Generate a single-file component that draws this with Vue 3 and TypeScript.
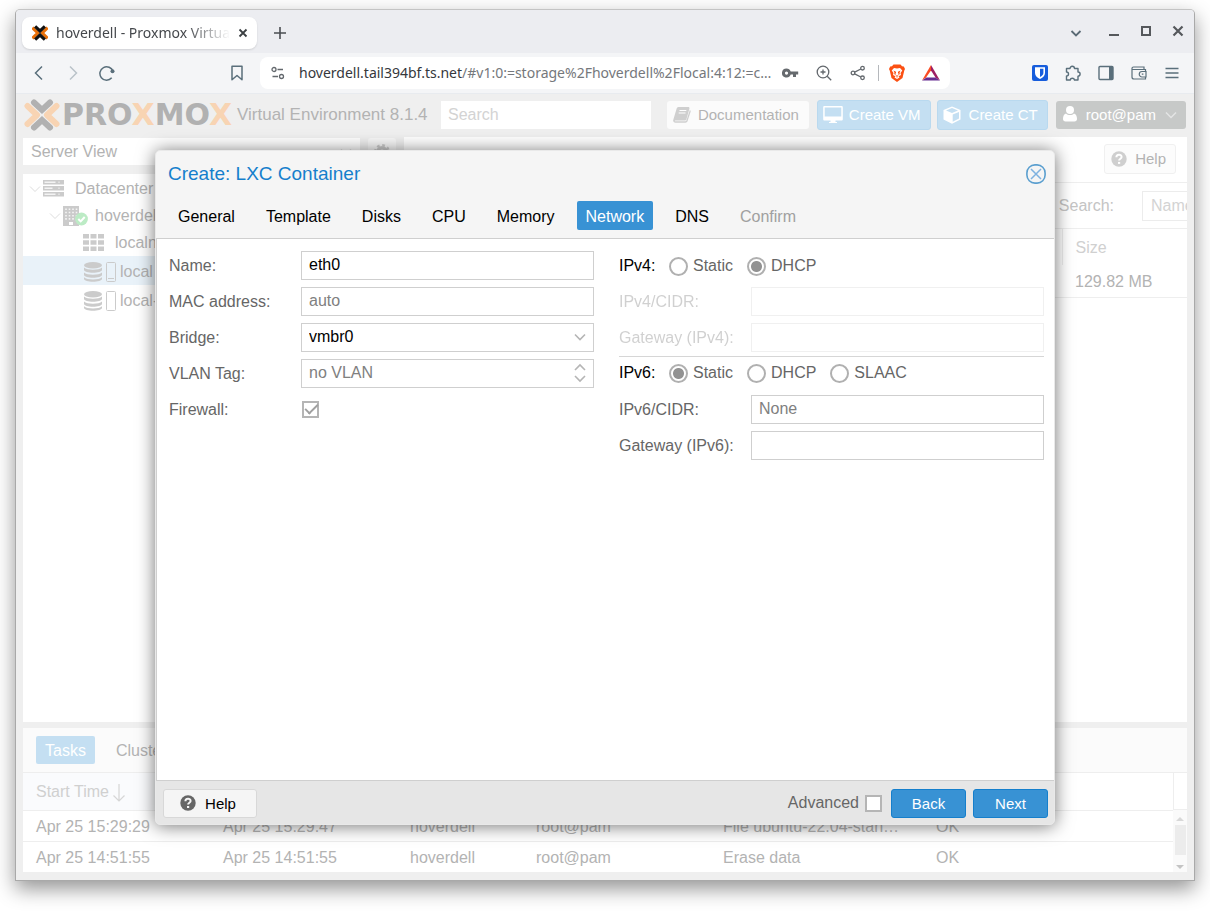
<script setup lang="ts">
import { ref } from 'vue'

interface WizardTab { label: string; disabled?: boolean }
interface Task { start: string; end: string; node: string; user: string; description: string; status: string }

const wizardTabs: WizardTab[] = [
  { label: 'General' },
  { label: 'Template' },
  { label: 'Disks' },
  { label: 'CPU' },
  { label: 'Memory' },
  { label: 'Network' },
  { label: 'DNS' },
  { label: 'Confirm', disabled: true },
]
const activeTab = ref('Network')

const tasks: Task[] = [
  { start: 'Apr 25 15:29:29', end: 'Apr 25 15:29:47', node: 'hoverdell', user: 'root@pam', description: 'File ubuntu-22.04-stan…', status: 'OK' },
  { start: 'Apr 25 14:51:55', end: 'Apr 25 14:51:55', node: 'hoverdell', user: 'root@pam', description: 'Erase data', status: 'OK' },
]

const name = ref('eth0')
const mac = ref('')
const bridge = ref('vmbr0')
const vlan = ref('')
const firewall = ref(true)
const ipv4Mode = ref('DHCP')
const ipv6Mode = ref('Static')
const ipv6 = ref('')
const gateway6 = ref('')
const advanced = ref(false)
</script>

<template>
  <div class="desktop">
    <div class="window">
      <div class="tabstrip">
        <div class="browser-tab">
          <svg class="favicon" width="16" height="16" viewBox="0 0 36 32">
            <g fill="none" stroke-width="7">
              <path stroke="#e8700a" d="M1 4l12 12L1 28M35 4L23 16l12 12" />
              <path stroke="#111" d="M7 1l11 10.500L29 1M7 31l11-10.500L29 31" />
            </g>
          </svg>
          <span class="tab-title">hoverdell - Proxmox Virtual Environment</span>
          <button class="plain" aria-label="Close tab">
            <svg width="10" height="10" viewBox="0 0 10 10"><path d="M1.500 1.500l7 7M8.500 1.500l-7 7" stroke="#3c4043" stroke-width="1.800" /></svg>
          </button>
        </div>
        <button class="plain new-tab" aria-label="New tab">
          <svg width="12" height="12" viewBox="0 0 12 12"><path d="M6 0v12M0 6h12" stroke="#4a4d52" stroke-width="1.600" /></svg>
        </button>
        <div class="window-controls">
          <button class="plain wide" aria-label="Search tabs">
            <svg width="12" height="12" viewBox="0 0 12 12"><path d="M1.500 4L6 8.500 10.500 4" fill="none" stroke="#5a6a75" stroke-width="1.800" /></svg>
          </button>
          <button class="plain" aria-label="Minimize">
            <svg width="12" height="12" viewBox="0 0 12 12"><path d="M1 10h10" stroke="#55585c" stroke-width="2" /></svg>
          </button>
          <button class="plain" aria-label="Maximize">
            <svg width="12" height="12" viewBox="0 0 12 12"><path d="M2 2h8v8H2z" fill="none" stroke="#55585c" stroke-width="2" /></svg>
          </button>
          <button class="plain" aria-label="Close window">
            <svg width="12" height="12" viewBox="0 0 12 12"><path d="M1.500 1.500l9 9M10.500 1.500l-9 9" stroke="#55585c" stroke-width="2.200" /></svg>
          </button>
        </div>
      </div>

      <div class="toolbar">
        <button class="plain nav" aria-label="Back">
          <svg width="16" height="16" viewBox="0 0 16 16"><path d="M11 1.500L4.500 8l6.500 6.500" fill="none" stroke="#5a6f7b" stroke-width="1.500" /></svg>
        </button>
        <button class="plain nav" aria-label="Forward">
          <svg width="16" height="16" viewBox="0 0 16 16"><path d="M5 1.500L11.500 8 5 14.500" fill="none" stroke="#bac3c9" stroke-width="1.500" /></svg>
        </button>
        <button class="plain nav" aria-label="Reload">
          <svg width="16" height="16" viewBox="0 0 16 16">
            <path d="M14 6.500A6.700 6.700 0 1 0 12.700 12.800" fill="none" stroke="#5a6f7b" stroke-width="1.500" />
            <circle cx="13.500" cy="6.300" r="2" fill="#5a6f7b" />
          </svg>
        </button>
        <button class="plain nav bookmark" aria-label="Bookmark">
          <svg width="16" height="16" viewBox="0 0 16 16"><path d="M3 1.200h10v13.600l-5-4.300-5 4.300z" fill="none" stroke="#5a6f7b" stroke-width="1.500" stroke-linejoin="round" /></svg>
        </button>
        <div class="address">
          <svg width="14" height="14" viewBox="0 0 14 14" fill="none" stroke="#63686d" stroke-width="1.300">
            <circle cx="3" cy="3.500" r="2" /><path d="M6.500 3.500H12M1.500 10.500H7" /><circle cx="10.500" cy="10.500" r="2" />
          </svg>
          <div class="url" role="textbox" aria-label="Address"><span>hoverdell.tail394bf.ts.net</span>/#v1:0:=storage%2Fhoverdell%2Flocal:4:12:=c…</div>
          <button class="plain nav" aria-label="Passwords">
            <svg width="18" height="12" viewBox="0 0 18 12"><path fill="#666a6e" fill-rule="evenodd" d="M5.500 1.500a4.500 4.500 0 1 0 4.200 6H12V10h3V7.500h2.200v-3H9.700A4.500 4.500 0 0 0 5.500 1.500zm0 3a1.600 1.600 0 1 1 0 3.200 1.600 1.600 0 0 1 0-3.200z" /></svg>
          </button>
          <button class="plain nav" aria-label="Zoom">
            <svg width="16" height="16" viewBox="0 0 16 16" fill="none" stroke="#63686d" stroke-width="1.300"><circle cx="7" cy="7" r="5.800" /><path d="M11.200 11.200L15.200 15.200M4.500 7h5M7 4.500v5" /></svg>
          </button>
          <button class="plain nav" aria-label="Share">
            <svg width="16" height="16" viewBox="0 0 16 16" fill="none" stroke="#63686d" stroke-width="1.300"><circle cx="3" cy="8" r="1.800" /><circle cx="12.500" cy="3.200" r="1.800" /><circle cx="12.500" cy="12.800" r="1.800" /><path d="M4.700 7.200L10.800 4M4.700 8.800l6.100 3.200" /></svg>
          </button>
          <span class="divider"></span>
          <button class="plain nav" aria-label="Brave Shields">
            <svg width="16" height="18" viewBox="0 0 16 18">
              <path fill="#fb5013" d="M4.500.5h7L13 2.200l1.800.2L16 5l-.7 1.500L13.500 14 8 18l-5.500-4L.7 6.500 0 5l1.200-2.600L3 2.200z" />
              <path fill="#fff" d="M5 4l3 .5L11 4l2.300 2.500L11.500 9l.5 2-2.500 1.200 1 1.300L8 15l-2.500-1.500 1-1.300L4 11l.5-2-1.800-2.500z" />
              <path fill="#fb5013" d="M4.500 6.500L7 7.700v1.600L6 10l2 1.800L10 10l-1-.7V7.700l2.500-1.200-1 2.300.3 1.200L8.500 12v1.500h-1V12L5.200 10l.3-1.200z" />
            </svg>
          </button>
          <button class="plain nav" aria-label="Brave Rewards">
            <svg width="18" height="16" viewBox="0 0 18 16"><path fill="#fb4b22" d="M9 0v5.500L4 12.500l-4 3z" /><path fill="#9e1f63" d="M9 0l9 15.500-4.500-3L9 5.500z" /><path fill="#662d91" d="M0 15.500l4.500-3h9l4.500 3z" /></svg>
          </button>
        </div>
        <button class="plain ext" aria-label="Bitwarden">
          <svg width="16" height="16" viewBox="0 0 16 16"><rect width="16" height="16" rx="2" fill="#175ddc" /><path fill="#fff" fill-rule="evenodd" d="M3 2.200h10V8c0 3-2.500 4.800-5 6-2.500-1.200-5-3-5-6zm5 1.600v8.300c1.800-1 3.400-2.300 3.400-4.100V3.800z" /></svg>
        </button>
        <button class="plain ext" aria-label="Extensions">
          <svg width="16" height="16" viewBox="0 0 16 16"><path d="M1.500 3.500H5A2 2 0 1 1 9.500 3.500H13V7a2 2 0 1 1 0 4.200V15H9.500a2.200 2.200 0 0 0-4.300 0H1.500v-4a2 2 0 0 0 0-4z" fill="none" stroke="#5a6f7b" stroke-width="1.400" stroke-linejoin="round" /></svg>
        </button>
        <button class="plain ext" aria-label="Sidebar">
          <svg width="16" height="16" viewBox="0 0 16 16"><rect x="1" y="1.500" width="14" height="13" rx="1" fill="none" stroke="#5a6f7b" stroke-width="1.400" /><path d="M11 1.500h4v13h-4z" fill="#5a6f7b" /></svg>
        </button>
        <button class="plain ext" aria-label="Wallet">
          <svg width="16" height="16" viewBox="0 0 16 16" fill="none" stroke="#5a6f7b" stroke-width="1.200"><path d="M14.500 6.500V4.500H1V12a2 2 0 0 0 2 2h11.500v-2M1 4.500V3.300C1 2.500 1.500 2 2.500 2H13v2.500" /><path d="M15 6.500h-4a2.700 2.700 0 0 0 0 5.500h4zM10.800 9.200h1.600" /></svg>
        </button>
        <button class="plain ext" aria-label="Menu">
          <svg width="16" height="16" viewBox="0 0 16 16"><path d="M1.500 3.500h13M1.500 8h13M1.500 12.500h13" stroke="#5a6f7b" stroke-width="1.400" /></svg>
        </button>
      </div>

      <div class="app">
        <header class="app-header">
          <div class="logo">
            <svg width="36" height="32" viewBox="0 0 36 32">
              <g fill="none" stroke-width="6" stroke-linecap="round" stroke-linejoin="round">
                <path stroke="#f8d4b3" d="M3.500 7L13 16l-9.500 9M32.500 7L23 16l9.500 9" />
                <path stroke="#b1b1b1" stroke-linejoin="miter" d="M10 3.500l8 7.500 8-7.500M10 28.500L18 21l8 7.500" />
              </g>
            </svg>
            <span class="wordmark">PRO<i>X</i>MO<i>X</i></span>
          </div>
          <span class="product">Virtual Environment 8.1.4</span>
          <input class="search" type="text" placeholder="Search" aria-label="Search">
          <button class="hbtn light docs">
            <svg width="18" height="16" viewBox="0 0 18 16"><path fill="#cfcfcf" d="M5.500 0h9.700c1 0 1.500.8 1.200 1.800L13.500 12c-.3 1-1 1.500-2 1.500H2.200c-.5 0-.7.800 0 .8h10c.7 0 1-.3 1.200-.8L16.800 3c.8.3 1 1 .8 1.800l-3 9.200c-.3 1-1.200 1.700-2.200 1.700H2.500C.6 15.700-.2 14.200.3 12.800L3.500 2C3.800.8 4.500 0 5.500 0z" /><path d="M6.500 3.500h6.800M5.700 6h6.800" stroke="#fff" /></svg>
            Documentation
          </button>
          <button class="hbtn blue">
            <svg width="20" height="18" viewBox="0 0 20 18"><path fill="#fff" fill-rule="evenodd" d="M1.500 0h17c.8 0 1.300.5 1.300 1.200v12c0 .8-.5 1.300-1.300 1.300h-6V16H14v1H6v-1h1.500v-1.500h-6C.7 14.500.2 14 .2 13.200v-12C.2.500.7 0 1.500 0zm.2 1.400v9.200h16.600V1.400z" /></svg>
            Create VM
          </button>
          <button class="hbtn blue ct">
            <svg width="18" height="18" viewBox="0 0 18 18"><path fill="#fff" fill-rule="evenodd" d="M9 .5L17.500 4v9.500L9 17.800.5 13.500V4zm0 1.400L3 4.400l6 2.500 6-2.500zm7 4L9.700 8.500v7.200L16 12.600z" /></svg>
            Create CT
          </button>
          <button class="hbtn user">
            <svg width="14" height="18" viewBox="0 0 14 18"><circle cx="7" cy="4" r="4" fill="#fff" /><path fill="#fff" d="M3 7.500c2 2 6 2 8 0 2.200.5 3 3 3 5.500 0 1.500-1 2.500-2.500 2.500h-9C1 15.500 0 14.500 0 13c0-2.500.8-5 3-5.500z" /></svg>
            root@pam
            <svg class="caret" width="12" height="8" viewBox="0 0 12 8"><path d="M1 1.500L6 6.500l5-5" fill="none" stroke="#e4e5e5" stroke-width="1.500" /></svg>
          </button>
        </header>

        <div class="main">
          <aside class="side">
            <div class="side-head">
              <div class="combo view">
                <select aria-label="View"><option>Server View</option></select>
                <svg width="12" height="8" viewBox="0 0 12 8"><path d="M1 1.500L6 6.500l5-5" fill="none" stroke="#e0e0e0" stroke-width="1.500" /></svg>
              </div>
              <button class="gear" aria-label="Settings">
                <svg width="16" height="16" viewBox="0 0 16 16"><circle cx="8" cy="8" r="4.300" fill="none" stroke="#ccc" stroke-width="3.400" /><circle cx="8" cy="8" r="6.800" fill="none" stroke="#ccc" stroke-width="2.400" stroke-dasharray="2.700 2.640" /></svg>
              </button>
            </div>
            <ul class="tree">
              <li>
                <svg class="arrow" width="12" height="8" viewBox="0 0 12 8"><path d="M1 1.500L6 6.500l5-5" fill="none" stroke="#ddd" /></svg>
                <svg class="dc" width="21" height="17" viewBox="0 0 21 17"><path fill="#cbcbcb" d="M0 0h21v4.500H0zM0 6h21v4.500H0zM0 12h21v4.500H0z" /><path d="M1.500 2.200h11M1.500 8.200h8M1.500 14.200h11M15.500 2.200h1M15.500 8.200h1M15.500 14.200h1" stroke="#f3f3f3" stroke-width="1.500" /></svg>
                Datacenter
              </li>
              <li class="l1">
                <svg class="arrow" width="12" height="8" viewBox="0 0 12 8"><path d="M1 1.500L6 6.500l5-5" fill="none" stroke="#ddd" /></svg>
                <svg class="node" width="25" height="20" viewBox="0 0 25 20"><path fill="#cbcbcb" d="M0 0h16v20H0z" /><path d="M3 2.500v12M6.500 2.500v12M10 2.500v12M13.500 2.500v12" stroke="#f5f5f5" stroke-width="1.600" stroke-dasharray="1.600 1.600" /><path fill="#fff" d="M6 16h4v3H6z" /><circle cx="18.500" cy="13" r="6.400" fill="#bcebc5" /><path d="M15.300 13l2.400 2.400 4-4.400" fill="none" stroke="#fff" stroke-width="2" /></svg>
                hoverdell
              </li>
              <li class="l2">
                <svg class="net" width="21" height="17" viewBox="0 0 21 17"><path fill="#cbcbcb" d="M0 0h6v4.500H0zM7.500 0h6v4.500h-6zM15 0h6v4.500h-6zM0 6.200h6v4.500H0zM7.500 6.200h6v4.500h-6zM15 6.200h6v4.500h-6zM0 12.400h6V17H0zM7.500 12.400h6V17h-6zM15 12.400h6V17h-6z" /></svg>
                localnet
              </li>
              <li v-for="(store, i) in ['local', 'local-lvm']" :key="store" class="l2 store" :class="{ selected: i === 0 }">
                <svg class="disk" width="18" height="20" viewBox="0 0 18 20"><ellipse cx="9" cy="3.200" rx="9" ry="3.200" fill="#cbcbcb" /><path fill="#cbcbcb" d="M0 5.500c3 3 15 3 18 0v2.300c0 4-18 4-18 0zM0 10.500c3 3 15 3 18 0v2.300c0 4-18 4-18 0zM0 15.200c3 3 15 3 18 0v1.600c0 4-18 4-18 0z" /></svg>
                <svg class="usage" width="10" height="20" viewBox="0 0 10 20"><rect x=".5" y=".5" width="9" height="19" rx="1" fill="none" stroke="#cbcbcb" /><path v-if="i === 0" d="M2 16.500h6" stroke="#cbcbcb" /></svg>
                {{ store }}
              </li>
            </ul>
          </aside>

          <section class="content">
            <div class="content-head">
              <button class="help-faded">
                <svg width="16" height="16" viewBox="0 0 16 16"><circle cx="8" cy="8" r="7.700" fill="#cfcfcf" /><path d="M5.400 6.200C5.400 3 10.600 3 10.600 6c0 1.800-2.500 1.700-2.500 3.600" fill="none" stroke="#fff" stroke-width="2" /><path d="M7 10.900h2.200v2H7z" fill="#fff" /></svg>
                Help
              </button>
            </div>
            <div class="content-tools">
              <label for="content-search">Search:</label>
              <input id="content-search" type="text" placeholder="Name, Format">
            </div>
            <table class="content-table">
              <thead><tr><th aria-label="Name"></th><th class="size">Size</th></tr></thead>
              <tbody><tr><td></td><td class="size">129.82 MB</td></tr></tbody>
            </table>
          </section>
        </div>

        <section class="log">
          <nav class="log-tabs">
            <button class="on">Tasks</button>
            <button>Cluster log</button>
          </nav>
          <div class="log-grid">
            <table>
              <colgroup><col class="c-time"><col class="c-time"><col class="c-node"><col class="c-time"><col class="c-desc"><col></colgroup>
              <thead>
                <tr>
                  <th class="sorted">Start Time <svg width="12" height="18" viewBox="0 0 12 18"><path d="M6 0v17M.5 11.500L6 17l5.500-5.500" fill="none" stroke="#d6d6d6" stroke-width="1.200" /></svg></th>
                  <th aria-label="End Time"></th><th aria-label="Node"></th><th aria-label="User name"></th><th aria-label="Description"></th><th aria-label="Status"></th>
                </tr>
              </thead>
              <tbody>
                <tr v-for="t in tasks" :key="t.start">
                  <td>{{ t.start }}</td><td>{{ t.end }}</td><td>{{ t.node }}</td><td>{{ t.user }}</td><td>{{ t.description }}</td><td>{{ t.status }}</td>
                </tr>
              </tbody>
            </table>
            <div class="scroll">
              <div class="scroll-head"></div>
              <div class="scroll-track">
                <svg width="8" height="4" viewBox="0 0 8 4"><path d="M0 4l4-4 4 4z" fill="#d8d8d8" /></svg>
                <div class="thumb"></div>
                <svg width="8" height="4" viewBox="0 0 8 4"><path d="M0 0l4 4 4-4z" fill="#c4c4c4" /></svg>
              </div>
            </div>
          </div>
        </section>

        <div class="mask">
          <form class="dialog" role="dialog" aria-labelledby="dialog-title" @submit.prevent>
            <div class="dialog-head">
              <div class="title-row">
                <h1 id="dialog-title">Create: LXC Container</h1>
                <button type="button" class="plain close" aria-label="Close">
                  <svg width="20" height="20" viewBox="0 0 20 20"><rect x=".9" y=".9" width="18.200" height="18.200" rx="8" fill="none" stroke="#5b9fcf" stroke-width="1.600" /><path d="M5 5l10 10M15 5L5 15" stroke="#7fb2e0" stroke-width="1.500" /></svg>
                </button>
              </div>
              <nav class="wizard-tabs">
                <button v-for="t in wizardTabs" :key="t.label" type="button" :class="{ active: t.label === activeTab }" :disabled="t.disabled" @click="activeTab = t.label">{{ t.label }}</button>
              </nav>
            </div>

            <div class="dialog-body">
              <div class="column">
                <div class="field"><label for="f-name">Name:</label><input id="f-name" v-model="name" class="box" type="text"></div>
                <div class="field"><label for="f-mac">MAC address:</label><input id="f-mac" v-model="mac" class="box" type="text" placeholder="auto"></div>
                <div class="field">
                  <label for="f-bridge">Bridge:</label>
                  <div class="combo">
                    <select id="f-bridge" v-model="bridge" class="box"><option>vmbr0</option></select>
                    <svg width="12" height="8" viewBox="0 0 12 8"><path d="M1 1.500L6 6.500l5-5" fill="none" stroke="#b5b5b5" stroke-width="1.600" /></svg>
                  </div>
                </div>
                <div class="field">
                  <label for="f-vlan">VLAN Tag:</label>
                  <div class="combo">
                    <input id="f-vlan" v-model="vlan" class="box" type="text" placeholder="no VLAN">
                    <svg width="12" height="20" viewBox="0 0 12 20"><path d="M1 7l5-5 5 5M1 13l5 5 5-5" fill="none" stroke="#b5b5b5" stroke-width="1.600" /></svg>
                  </div>
                </div>
                <div class="field"><label for="f-fw">Firewall:</label><input id="f-fw" v-model="firewall" class="check inset" type="checkbox"></div>
              </div>

              <div class="column">
                <div class="radios" role="radiogroup" aria-labelledby="ipv4-legend">
                  <span id="ipv4-legend">IPv4:</span>
                  <label v-for="m in ['Static', 'DHCP']" :key="m"><input v-model="ipv4Mode" type="radio" name="ipv4" :value="m">{{ m }}</label>
                </div>
                <div class="field off"><label for="f-ip4">IPv4/CIDR:</label><input id="f-ip4" class="box" type="text" disabled></div>
                <div class="field off"><label for="f-gw4">Gateway (IPv4):</label><input id="f-gw4" class="box" type="text" disabled></div>
                <div class="radios ruled" role="radiogroup" aria-labelledby="ipv6-legend">
                  <span id="ipv6-legend">IPv6:</span>
                  <label v-for="m in ['Static', 'DHCP', 'SLAAC']" :key="m"><input v-model="ipv6Mode" type="radio" name="ipv6" :value="m">{{ m }}</label>
                </div>
                <div class="field"><label for="f-ip6">IPv6/CIDR:</label><input id="f-ip6" v-model="ipv6" class="box" type="text" placeholder="None"></div>
                <div class="field"><label for="f-gw6">Gateway (IPv6):</label><input id="f-gw6" v-model="gateway6" class="box" type="text"></div>
              </div>
            </div>

            <div class="dialog-foot">
              <button type="button" class="foot-btn help">
                <svg width="16" height="18" viewBox="0 0 16 18"><circle cx="8" cy="8" r="7.700" fill="#666" /><path d="M5.400 6.200C5.400 3 10.600 3 10.600 6c0 1.800-2.500 1.700-2.500 3.600" fill="none" stroke="#f5f5f5" stroke-width="2" /><path d="M7 10.900h2.200v2H7z" fill="#f5f5f5" /></svg>
                Help
              </button>
              <label class="advanced">Advanced <input v-model="advanced" class="check" type="checkbox"></label>
              <button type="button" class="foot-btn primary">Back</button>
              <button type="submit" class="foot-btn primary">Next</button>
            </div>
          </form>
        </div>
      </div>
    </div>
  </div>
</template>

<style>
body { background: #fff; }
</style>

<style scoped>
* { box-sizing: border-box; }
button, input, select { font: inherit; color: inherit; margin: 0; }
svg { flex: none; display: block; }
.plain { border: 0; padding: 0; background: none; display: flex; align-items: center; justify-content: center; }

.desktop { min-height: 100vh; display: flex; padding: 9px 15px 31px; overflow: hidden; font: 16px/20px "Liberation Sans", Arial, sans-serif; }
.window { flex: 1; min-width: 0; display: flex; flex-direction: column; border: 1px solid #a9a9a9; border-top-color: #c4c4c4; border-radius: 5px 5px 0 0; background: #efefef; box-shadow: 0 8px 20px rgba(0, 0, 0, 0.42); }

.tabstrip { height: 43px; display: flex; align-items: center; padding: 3px 0 0 6px; background: #ecedf1; border-radius: 4px 4px 0 0; }
.browser-tab { width: 235px; height: 32px; display: flex; align-items: center; gap: 8px; padding: 0 9px 0 10px; border-radius: 8px; background: #fff; box-shadow: 0 1px 2px rgba(0, 0, 0, 0.12); }
.tab-title { flex: 1; overflow: hidden; white-space: nowrap; font: 14px/20px "Noto Sans", "Open Sans", sans-serif; color: #45484c; -webkit-mask-image: linear-gradient(90deg, #000 75%, transparent); mask-image: linear-gradient(90deg, #000 75%, transparent); }
.new-tab { width: 46px; height: 32px; }
.window-controls { margin: 0 0 4px auto; display: flex; }
.window-controls button { width: 32px; height: 32px; }
.window-controls .wide { width: 44px; padding-top: 4px; }

.toolbar { height: 41px; display: flex; align-items: center; padding: 0 6px; background: #f4f5f7; border-bottom: 1px solid #e8ebef; }
.nav { width: 34px; height: 32px; flex: none; }
.ext { width: 33px; height: 32px; flex: none; }
.bookmark { margin-left: 96px; }
.address { flex: 1; min-width: 0; height: 32px; display: flex; align-items: center; margin: 0 73px 0 6px; padding: 0 2px 0 11px; border-radius: 8px; background: #fff; }
.url { flex: 1; min-width: 0; margin-left: 14px; overflow: hidden; white-space: nowrap; font: 14px/20px "Noto Sans", "Open Sans", sans-serif; color: #75787c; }
.url span { color: #35383c; }
.divider { width: 1px; height: 16px; margin: 0 1px 0 3px; background: #b5b8bc; }

.app { position: relative; flex: 1; display: flex; flex-direction: column; padding: 0 7px 8px; color: #b3b3b3; background: #efefef; }
.app-header { height: 43px; display: flex; align-items: center; padding-bottom: 1px; }
.logo { display: flex; align-items: center; width: 214px; padding-left: 1px; }
.wordmark { margin-left: 2px; font: bold 30px/32px "DejaVu Sans", sans-serif; color: #b1b1b1; }
.wordmark i { font-style: normal; color: #f8d4b3; }
.product { width: 204px; font-size: 17px; white-space: nowrap; }
.search { flex: 0 1 210px; min-width: 80px; height: 28px; padding: 0 7px; border: 0; background: #fff; }
.search::placeholder { color: #d3d3d3; opacity: 1; }
.hbtn { height: 28px; display: flex; align-items: center; gap: 10px; padding: 0; border: 1px solid transparent; border-radius: 3px; font-size: 15px; white-space: nowrap; }
.hbtn.docs { margin-left: auto; padding: 0 9px 0 5px; gap: 7px; }
.hbtn.light { background: #fbfbfb; }
.hbtn.blue { height: 30px; margin-left: 8px; padding: 0 9px 0 5px; gap: 6px; border-color: #b9d9ef; background: #c4dff2; color: #fff; }
.hbtn.ct { margin-left: 6px; gap: 8px; }
.hbtn.user { margin: 0 1px 0 8px; padding: 0 8px 0 6px; gap: 9px; background: #c7c9c8; color: #fff; }

.main { flex: 1; display: flex; gap: 8px; }
.side { width: 373px; display: flex; flex-direction: column; padding-top: 1px; }
.side-head { display: flex; gap: 8px; margin-bottom: 9px; }
.combo { position: relative; flex: 1; display: flex; }
.combo select { flex: 1; appearance: none; }
.combo svg { position: absolute; right: 8px; top: 0; bottom: 0; margin: auto; pointer-events: none; }
.view select { height: 27px; padding: 0 8px; border: 0; background: #fff; border-radius: 0; }
.gear { width: 28px; height: 27px; display: flex; align-items: center; justify-content: center; padding: 0; border: 0; border-radius: 3px; background: #f8f8f8; }
.tree { flex: 1; margin: 0; padding: 1px 0 0; list-style: none; background: #fff; }
.tree li { height: 27px; display: flex; align-items: center; padding-left: 6px; white-space: nowrap; overflow: hidden; }
.tree .l1 { padding-left: 26px; }
.tree .l2 { padding-left: 60px; }
.tree .store { height: 29px; padding: 2px 0 0 61px; }
.tree .selected { background: #e9f2f9; }
.arrow { margin-right: 2px; }
.dc { margin-right: 11px; }
.node { margin-right: 7px; }
.net { margin-right: 11px; }
.disk { margin-right: 4px; }
.usage { margin-right: 4px; }

.content { flex: 1; min-width: 0; background: #fff; }
.content-head { height: 46px; display: flex; align-items: center; justify-content: flex-end; padding: 0 11px 2px 0; border-bottom: 1px solid #eee; }
.help-faded { height: 30px; display: flex; align-items: center; gap: 8px; padding: 0 9px 0 6px; border: 1px solid #f0f0f0; border-radius: 3px; background: #fcfcfc; font-size: 15px; }
.content-tools { height: 46px; display: flex; align-items: center; justify-content: flex-end; gap: 28px; border-bottom: 1px solid #eee; color: #c4c4c4; }
.content-tools input { width: 45px; height: 30px; padding: 0 0 0 8px; border: 1px solid #ececec; border-right: 0; background: #fff; }
.content-tools input::placeholder { color: #d3d3d3; opacity: 1; }
table { border-collapse: collapse; table-layout: fixed; width: 100%; }
th, td { text-align: left; font-weight: normal; padding: 2px 0 0 13px; white-space: nowrap; overflow: hidden; }
th { color: #d0d0d0; }
.content-table th { height: 36px; }
.content-table td { height: 32px; border-bottom: 1px solid #eee; }
.content-table .size { width: 125px; }
.content-table th.size { border-left: 1px solid #eee; }

.log { margin: 6px 0 0; background: #fff; }
.log-tabs { height: 45px; display: flex; align-items: center; gap: 12px; padding-left: 13px; background: #fbfbfb; border-bottom: 1px solid #eee; }
.log-tabs button { height: 28px; padding: 2px 9px 0; border: 0; border-radius: 2px; background: none; }
.log-tabs .on { background: #c4dff2; color: #fff; }
.log-grid { display: flex; }
.log-grid table { flex: 1; }
.log-grid th { height: 37px; border-bottom: 1px solid #eee; }
.log-grid th svg { display: inline-block; vertical-align: middle; }
.sorted { background: #fafbfd; }
.log-grid tbody tr { height: 31px; }
.log-grid tbody tr + tr { border-top: 1px solid #eee; }
.c-time { width: 187px; }
.c-node { width: 126px; }
.c-desc { width: 213px; }
.scroll { width: 14px; display: flex; flex-direction: column; }
.scroll-head { height: 37px; border: 1px solid #eee; border-width: 0 0 1px 1px; }
.scroll-track { flex: 1; display: flex; flex-direction: column; align-items: center; padding: 7px 0 3px; background: #fafafa; }
.thumb { width: 11px; height: 30px; margin: 4px 0 auto; background: #ececec; }

.mask { position: absolute; inset: 0; display: flex; align-items: center; justify-content: center; }
.dialog { width: 900px; max-width: 96%; border: 1px solid #e9e9e9; border-radius: 5px; background: #f5f5f5; box-shadow: 0 1px 18px rgba(0, 0, 0, 0.55); color: #666; overflow: hidden; }
.dialog-head { padding: 12px 8px 8px 12px; border-bottom: 1px solid #cfcfcf; }
.title-row { display: flex; align-items: center; justify-content: space-between; height: 22px; margin-bottom: 16px; }
h1 { margin: 0; font-size: 19px; line-height: 22px; font-weight: normal; color: #157fcc; }
.wizard-tabs { display: flex; gap: 13px; margin-left: 1px; }
.wizard-tabs button { height: 29px; padding: 3px 9px 0; border: 0; border-radius: 2px; background: none; color: #000; }
.wizard-tabs .active { background: #3892d4; color: #fff; }
.wizard-tabs button:disabled { color: #a0a0a0; }

.dialog-body { min-height: 541px; display: grid; grid-template-columns: 1fr 1fr; gap: 25px; padding: 12px 10px 12px 12px; border-left: 1px solid #cfcfcf; background: #fff; }
.column { display: flex; flex-direction: column; gap: 7px; }
.field { display: flex; align-items: center; height: 29px; }
.field > label { flex: 0 0 132px; padding-top: 2px; }
.box { flex: 1; min-width: 0; width: 100%; height: 29px; padding: 0 7px; border: 1px solid #cfcfcf; border-radius: 0; background: #fff; color: #000; outline: 0; }
.box::placeholder { color: #808080; opacity: 1; }
.off { opacity: 0.3; }
.radios { display: flex; align-items: center; height: 29px; padding-top: 2px; }
.radios span { width: 50px; color: #000; }
.radios label { display: flex; align-items: center; gap: 5px; margin-right: 14px; }
.ruled { height: 32px; margin-top: -3px; border-top: 1px solid #d6d6d6; }
input[type='radio'] { appearance: none; width: 19px; height: 19px; border: 2px solid #b0b0b0; border-radius: 50%; background: #fff; }
input[type='radio']:checked { background: radial-gradient(circle, #929292 5px, #fff 6px); }
.check { appearance: none; position: relative; width: 17px; height: 17px; border: 2px solid #b5b5b5; background: #fff; }
.check:checked::after { content: ''; position: absolute; left: 1px; top: 1px; width: 11px; height: 5px; border: solid #a0a0a0; border-width: 0 0 2px 2px; transform: rotate(-45deg); }
.inset { margin-left: 1px; }

.dialog-foot { height: 44px; display: flex; align-items: center; gap: 7px; padding: 2px 6px 0 7px; border-top: 1px solid #cfcfcf; background: #e6e6e6; }
.foot-btn { height: 29px; width: 75px; display: flex; align-items: center; justify-content: center; padding: 1px 0 0; border: 1px solid #d8d8d8; border-radius: 3px; background: #f5f5f5; font-size: 15px; color: #000; }
.foot-btn.help { width: 94px; gap: 9px; padding: 1px 10px 0 6px; }
.foot-btn.primary { border-color: #157fcc; background: #3892d4; color: #fff; }
.advanced { display: flex; align-items: center; gap: 6px; margin: 0 2px 0 auto; }
</style>
